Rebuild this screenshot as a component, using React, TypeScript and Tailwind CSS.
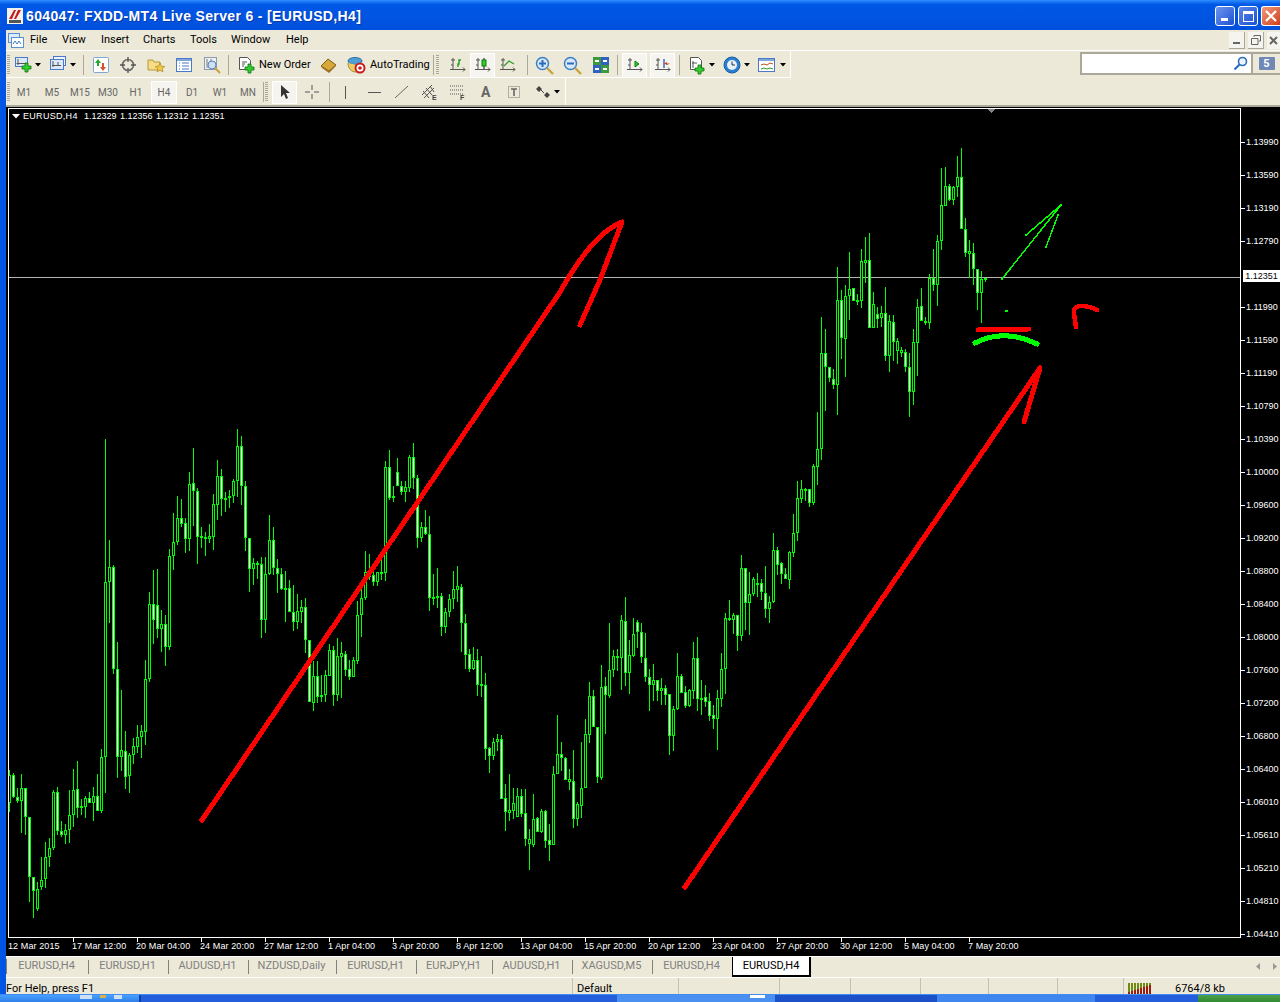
import type { ReactNode } from "react";

// x, high, body top, body bottom, low, 1 = white body
const candles: number[][] = [
  [9,770,775,803,812,0],[13,773,775,797,798,1],[17,788,797,801,803,1],[21,774,788,801,833,0],[25,788,788,817,835,1],[29,817,817,877,902,1],[33,877,877,891,918,1],[37,882,889,909,911,0],
  [41,857,880,887,890,0],[45,842,857,879,888,0],[49,838,848,857,867,0],[53,790,792,848,850,0],[57,787,792,831,835,1],[61,821,831,835,837,1],[65,824,830,835,844,0],[69,790,815,830,843,0],
  [73,769,790,815,827,0],[77,761,789,808,818,1],[81,799,806,808,815,1],[85,796,798,807,818,0],[89,792,798,803,803,1],[93,787,796,803,821,0],[97,774,796,811,811,1],[101,749,757,811,813,0],
  [105,439,582,757,793,0],[109,540,567,582,623,0],[113,565,567,669,674,1],[117,642,669,757,778,1],[121,690,750,757,771,0],[125,731,751,777,789,1],[129,753,755,776,793,0],[133,738,746,755,764,0],
  [137,725,737,747,753,0],[141,725,731,737,758,0],[145,660,679,732,745,0],[149,592,604,679,682,0],[153,570,604,620,644,1],[157,569,605,629,638,1],[161,610,624,629,652,0],[165,615,624,647,666,1],
  [169,549,556,647,650,0],[173,513,542,556,570,0],[177,496,518,542,545,0],[181,499,518,524,527,1],[185,518,523,539,553,1],[189,472,484,539,551,0],[193,448,483,491,526,1],[197,488,491,537,564,1],
  [201,527,536,537,548,1],[205,532,537,539,556,1],[209,524,536,539,543,0],[213,494,504,537,550,0],[217,460,476,505,520,0],[221,469,476,499,516,1],[225,492,498,499,512,1],[229,490,496,498,508,0],
  [233,479,481,496,503,0],[237,429,446,481,497,0],[241,436,446,486,505,1],[245,481,486,538,551,1],[249,538,538,569,592,1],[253,558,563,569,585,0],[257,561,563,564,579,1],[261,557,564,620,638,1],
  [265,557,574,620,633,0],[269,515,540,574,575,0],[273,527,540,568,575,1],[277,559,568,574,593,1],[281,568,574,589,590,1],[285,571,588,589,622,1],[289,580,588,612,612,1],[293,585,612,622,631,1],
  [297,594,611,622,629,0],[301,600,607,612,623,0],[305,598,607,640,653,1],[309,640,640,702,702,1],[313,661,676,703,711,0],[317,661,676,697,703,1],[321,675,695,697,702,0],[325,670,675,695,702,0],
  [329,644,650,676,676,0],[333,646,650,695,706,1],[337,638,656,695,701,0],[341,642,653,657,698,0],[345,651,654,670,676,1],[349,660,669,677,680,1],[353,657,660,677,677,0],[357,601,615,661,664,0],
  [361,581,598,615,637,0],[365,551,572,598,600,0],[369,554,572,577,580,0],[373,570,575,582,586,1],[377,572,572,582,586,0],[381,560,572,573,580,1],[385,461,467,573,581,0],[389,450,467,498,500,1],
  [393,486,496,498,502,1],[397,458,472,486,486,1],[401,481,486,492,495,1],[405,481,487,492,502,0],[409,455,457,488,492,0],[413,443,457,478,489,1],[417,475,478,538,548,1],[421,522,527,538,542,0],
  [425,510,527,534,535,1],[429,516,534,598,611,1],[433,574,597,598,605,1],[437,568,596,598,608,1],[441,593,596,627,636,1],[445,608,612,627,633,0],[449,594,599,612,617,0],[453,571,589,599,609,0],
  [457,566,586,590,602,0],[461,584,587,623,652,1],[465,614,623,655,669,1],[469,649,654,669,672,1],[473,647,660,669,670,0],[477,649,660,685,696,1],[481,656,684,686,697,1],[485,673,685,749,760,1],
  [489,747,748,756,773,1],[493,738,742,756,760,0],[497,734,739,742,751,0],[501,735,739,799,799,1],[505,784,798,812,831,1],[509,774,810,813,821,0],[513,788,803,811,819,0],[517,788,796,817,817,0],
  [521,789,796,814,817,1],[525,789,813,839,846,1],[529,829,839,844,870,0],[533,794,819,845,847,0],[537,817,818,832,832,1],[541,809,811,832,833,0],[545,810,811,841,848,1],[549,824,840,845,861,1],
  [553,766,774,845,845,0],[557,715,754,774,774,0],[561,742,754,758,771,1],[565,757,758,780,780,1],[569,769,779,782,790,0],[573,750,781,819,828,1],[577,802,804,819,826,0],[581,742,788,806,818,0],
  [585,719,734,788,788,0],[589,682,696,735,743,0],[593,690,696,727,727,1],[597,727,727,777,783,1],[601,665,687,778,780,0],[605,677,686,695,734,1],[609,623,670,696,698,0],[613,650,656,670,677,0],
  [617,649,656,658,671,0],[621,615,620,658,690,0],[625,597,621,673,686,1],[629,640,655,673,694,0],[633,618,634,656,657,0],[637,620,622,632,648,1],[641,623,632,657,663,1],[645,633,658,677,682,1],
  [649,669,677,685,711,1],[653,664,680,685,701,0],[657,680,680,691,701,1],[661,678,688,691,705,0],[665,685,688,695,705,1],[669,694,694,736,755,1],[673,706,709,736,751,0],[677,653,676,709,710,0],
  [681,674,676,693,693,1],[685,686,692,706,708,1],[689,689,690,706,707,0],[693,642,658,691,699,0],[697,637,658,699,711,1],[701,680,698,699,715,1],[705,685,697,702,707,1],[709,693,701,716,721,1],
  [713,705,715,719,729,1],[717,690,698,719,750,0],[721,653,669,699,707,0],[725,613,618,669,694,0],[729,600,618,620,621,0],[733,613,615,620,634,0],[737,615,615,636,651,1],[741,555,568,636,641,0],
  [745,568,568,603,630,1],[749,572,594,603,635,0],[753,577,579,594,596,0],[757,573,583,585,597,0],[761,579,583,592,600,1],[765,566,593,609,618,1],[769,596,602,609,623,0],[773,533,550,602,603,0],
  [777,547,550,565,575,1],[781,562,563,574,584,1],[785,568,574,579,579,1],[789,551,552,580,589,0],[793,514,533,553,557,0],[797,481,498,533,541,0],[801,480,489,499,503,0],[805,488,489,490,501,1],
  [809,489,489,503,507,1],[813,464,466,503,505,0],[817,412,449,467,485,0],[821,317,353,449,460,0],[825,329,353,367,411,1],[829,367,367,378,382,1],[833,369,379,385,389,1],[837,267,300,385,415,0],
  [841,290,300,338,359,1],[845,285,296,339,377,0],[849,252,289,296,320,0],[853,288,288,301,301,1],[857,294,300,301,305,1],[861,249,261,301,308,0],[865,237,260,263,283,0],[869,233,260,328,328,1],
  [873,292,304,328,328,0],[877,307,314,319,328,1],[881,306,313,318,327,0],[885,287,313,356,361,1],[889,315,321,356,372,0],[893,315,322,342,361,1],[897,338,341,351,364,0],[901,347,350,353,357,0],
  [905,349,352,367,372,1],[909,353,367,392,417,1],[913,329,342,392,405,0],[917,299,307,343,376,0],[921,288,306,321,321,1],[925,317,321,323,325,0],[929,274,278,323,329,0],[933,249,278,285,291,1],
  [937,235,241,285,306,0],[941,168,205,241,250,0],[945,167,186,206,206,0],[949,184,186,200,201,1],[953,186,187,200,205,0],[957,156,177,187,197,0],[961,148,177,229,229,1],[965,218,229,253,257,1],
  [969,240,251,254,278,0],[973,243,253,269,285,1],[977,269,269,293,310,1],[981,271,279,293,323,0],[985,278,278,280,282,0],
];

const prices = ["1.13990","1.13590","1.13190","1.12790","","1.11990","1.11590","1.11190","1.10790","1.10390","1.10000","1.09600","1.09200","1.08800","1.08400","1.08000","1.07600","1.07200","1.06800","1.06400","1.06010","1.05610","1.05210","1.04810","1.04410"];
const times = ["12 Mar 2015","17 Mar 12:00","20 Mar 04:00","24 Mar 20:00","27 Mar 12:00","1 Apr 04:00","3 Apr 20:00","8 Apr 12:00","13 Apr 04:00","15 Apr 20:00","20 Apr 12:00","23 Apr 04:00","27 Apr 20:00","30 Apr 12:00","5 May 04:00","7 May 20:00"];
const menus: [string, string][] = [["File","w-[32px]"],["View","w-[39px]"],["Insert","w-[42px]"],["Charts","w-[47px]"],["Tools","w-[41px]"],["Window","w-[55px]"],["Help","w-[30px]"]];
const frames = ["M1","M5","M15","M30","H1","H4","D1","W1","MN"];
const tabs: [string, string][] = [
  ["EURUSD,H4","w-[82px]"],["EURUSD,H1","w-[80px]"],["AUDUSD,H1","w-[80px]"],["NZDUSD,Daily","w-[88px]"],["EURUSD,H1","w-[80px]"],
  ["EURJPY,H1","w-[76px]"],["AUDUSD,H1","w-[80px]"],["XAGUSD,M5","w-[80px]"],["EURUSD,H4","w-[79px]"],
];
const statusCells = ["w-[567px]","w-[106px]","w-[101px]","w-[71px]","w-[70px]","w-[68px]","w-[69px]","w-[66px]"];

function Icon({ w = 18, h = 18, children, className = "" }: { w?: number; h?: number; children: ReactNode; className?: string }) {
  return (
    <svg width={w} height={h} viewBox={`0 0 ${w} ${h}`} className={`shrink-0 ${className}`}>
      {children}
    </svg>
  );
}

const Arrow = ({ className = "" }: { className?: string }) => (
  <svg width="6" height="4" viewBox="0 0 6 4" className={`shrink-0 ${className}`}>
    <path d="M0 0h6L3 3.5z" fill="#000" />
  </svg>
);

const Sep = ({ className = "" }: { className?: string }) => <div className={`w-px h-[20px] bg-[#aca899] shrink-0 ${className}`} />;

const Grip = ({ className = "" }: { className?: string }) => (
  <div className={`w-[3px] h-[20px] shrink-0 border-y-0 bg-[repeating-linear-gradient(to_bottom,#aca899_0,#aca899_1px,#ece9d8_1px,#ece9d8_2px)] ${className}`} />
);

const PlusBadge = ({ x, y }: { x: number; y: number }) => (
  <path d={`M${x + 3} ${y}h3v3h3v3h-3v3h-3v-3h-3v-3h3z`} fill="#2fd02f" stroke="#0d6f0d" strokeWidth="0.8" />
);

const AxisChart = ({ children }: { children?: ReactNode }) => (
  <Icon w={16} h={16}>
    <path d="M3 1v12M0 12.5h15M1 3h4M1 8h2M13 10.5l2 2-2 2" stroke="#555" strokeWidth="1" fill="none" />
    {children}
  </Icon>
);

function Toolbar1() {
  return (
    <div className="flex items-center h-[27px] pt-[2px] w-[785px] border-b border-r border-white">
      <Grip className="ml-[1px]" />
      <Icon className="ml-[5px]">
        <rect x="0.5" y="1.5" width="12" height="9" fill="#dbe9fb" stroke="#4a79c9" />
        <path d="M3 3v6M1.5 7.5h9" stroke="#555" />
        <PlusBadge x={7} y={7} />
      </Icon>
      <Arrow className="ml-[2px]" />
      <Icon className="ml-[9px]">
        <rect x="3.5" y="0.5" width="12" height="9" fill="#eef4fd" stroke="#4a79c9" />
        <rect x="0.5" y="3.5" width="13" height="10" fill="#dbe9fb" stroke="#4a79c9" />
        <path d="M3 5v6M2 9.5h9M8 6v3" stroke="#555" />
      </Icon>
      <Arrow className="ml-[2px]" />
      <Sep className="ml-[7px]" />
      <Icon className="ml-[8px]">
        <rect x="1.5" y="1.5" width="15" height="15" rx="1" fill="#fff" stroke="#7fa6d8" />
        <path d="M6 3l3 4H7v3H5V7H3z" fill="#2aa52a" />
        <path d="M11 15l-3-4h2V7h2v4h2z" fill="#d8502a" />
      </Icon>
      <Icon className="ml-[9px]">
        <circle cx="9" cy="9" r="5.5" fill="none" stroke="#6a6a6a" strokeWidth="1.6" />
        <path d="M9 1v5M9 12v5M1 9h5M12 9h5" stroke="#555" strokeWidth="1.3" />
      </Icon>
      <Icon className="ml-[10px]">
        <path d="M1 4h5l1 2h6v8H1z" fill="#f5dc85" stroke="#b8963a" />
        <path d="M13 7l1.4 3.2 3.4.3-2.6 2.2.8 3.3-3-1.8-3 1.8.8-3.3-2.6-2.2 3.4-.3z" fill="#f3c93b" stroke="#a9842a" strokeWidth="0.7" />
      </Icon>
      <Icon className="ml-[10px]">
        <rect x="1.5" y="2.5" width="15" height="13" fill="#fff" stroke="#4a79c9" />
        <path d="M2 3h14v2H2z" fill="#7fa6d8" />
        <path d="M4 7h1M4 10h1M4 13h1M7 7h7M7 10h7M7 13h7" stroke="#4a79c9" />
      </Icon>
      <Icon className="ml-[10px]">
        <rect x="1.5" y="1.5" width="12" height="12" fill="#eef1f5" stroke="#8a9ab0" />
        <path d="M4 3v9M8 3v9" stroke="#777" />
        <circle cx="9" cy="9" r="4" fill="#cfe0f5" stroke="#5a82b8" />
        <path d="M12 12l5 5" stroke="#c9a33a" strokeWidth="2" />
      </Icon>
      <Sep className="ml-[7px]" />
      <Icon className="ml-[8px]">
        <path d="M2.5 1.5h8l3 3v9h-11z" fill="#fff" stroke="#555" />
        <path d="M5 6h5M5 8h3M5 10h2" stroke="#555" />
        <PlusBadge x={8} y={8} />
      </Icon>
      <span className="ml-[4px] w-[60px] shrink-0 text-[11px] text-black whitespace-nowrap">New Order</span>
      <Icon className="ml-[1px]">
        <path d="M1 10l7-7 8 6-7 6z" fill="#d8a93a" stroke="#7d5c18" />
        <path d="M1 10l1 2 7 5 7-7v-1l-7 6z" fill="#9a7423" />
      </Icon>
      <Icon className="ml-[9px]" w={19}>
        <ellipse cx="8" cy="5" rx="7" ry="3.5" fill="#4e9fd6" stroke="#2d6f9e" />
        <path d="M1 7c0 5 3 9 8 9s6-3 6-6" fill="#f0cd63" stroke="#a98a2c" />
        <circle cx="13" cy="12" r="4.5" fill="#fff" stroke="#c81e1e" strokeWidth="2" />
        <circle cx="13" cy="12" r="1.8" fill="#c81e1e" />
      </Icon>
      <span className="ml-[4px] w-[60px] shrink-0 text-[11px] text-black whitespace-nowrap">AutoTrading</span>
      <Sep className="ml-[3px]" />
      <Grip className="ml-[2px]" />
      <div className="ml-[6px] w-[25px] h-[25px] shrink-0 flex items-center justify-center">
        <AxisChart><path d="M8 10V7h1V3h2" stroke="#1f9e1f" strokeWidth="1.4" fill="none" /></AxisChart>
      </div>
      <div className="w-[25px] h-[25px] shrink-0 flex items-center justify-center bg-[#f5f4ee] border border-white">
        <AxisChart>
          <path d="M9 1v11" stroke="#111" />
          <rect x="7" y="3" width="4" height="6" fill="#2ecc2e" stroke="#0c7a0c" />
        </AxisChart>
      </div>
      <div className="w-[25px] h-[25px] shrink-0 flex items-center justify-center">
        <AxisChart><path d="M4 9l5-5 5 3" stroke="#2a9d2a" strokeWidth="1.2" fill="none" /></AxisChart>
      </div>
      <Sep className="ml-[7px]" />
      <Icon className="ml-[7px]" w={19} h={19}>
        <circle cx="7.5" cy="7.5" r="6" fill="#d7e8fb" stroke="#3f7fc4" strokeWidth="1.5" />
        <path d="M4 7.5h7M7.5 4v7" stroke="#2b6cb8" strokeWidth="2" />
        <path d="M12 12l6 6" stroke="#c9a33a" strokeWidth="2.4" />
      </Icon>
      <Icon className="ml-[9px]" w={19} h={19}>
        <circle cx="7.5" cy="7.5" r="6" fill="#d7e8fb" stroke="#3f7fc4" strokeWidth="1.5" />
        <path d="M4 7.5h7" stroke="#2b6cb8" strokeWidth="2" />
        <path d="M12 12l6 6" stroke="#c9a33a" strokeWidth="2.4" />
      </Icon>
      <Icon className="ml-[10px]">
        <rect x="1" y="1" width="8" height="8" fill="#3c9a3c" />
        <rect x="9" y="1" width="8" height="8" fill="#2f62c0" />
        <rect x="1" y="9" width="8" height="8" fill="#2f62c0" />
        <rect x="9" y="9" width="8" height="8" fill="#3c9a3c" />
        <path d="M3 5h4M11 5h4M3 13h4M11 13h4" stroke="#fff" strokeWidth="2" />
      </Icon>
      <Sep className="ml-[7px]" />
      <div className="ml-[4px] w-[25px] h-[25px] shrink-0 flex items-center justify-center bg-[#f5f4ee] border border-white">
        <AxisChart><path d="M8 4l4 3-4 3z" fill="#2ecc2e" stroke="#0c7a0c" /></AxisChart>
      </div>
      <div className="ml-[3px] w-[25px] h-[25px] shrink-0 flex items-center justify-center bg-[#f5f4ee] border border-white">
        <AxisChart><path d="M9 2v9" stroke="#2f62c0" strokeWidth="1.4" /><path d="M15 6.5h-3V5l-3 1.5L12 8z" fill="#c8401e" /></AxisChart>
      </div>
      <Sep className="ml-[4px]" />
      <Icon className="ml-[8px]" w={18} h={19}>
        <path d="M2.5 1.5h8l3 3v9h-11z" fill="#fff" stroke="#555" />
        <path d="M5 12V5M4 7h5" stroke="#555" />
        <PlusBadge x={7} y={9} />
      </Icon>
      <Arrow className="ml-[3px]" />
      <Icon className="ml-[8px]" w={18} h={18}>
        <circle cx="9" cy="9" r="8" fill="#2a7fd0" stroke="#1a5ca3" />
        <circle cx="9" cy="9" r="5" fill="#e8f0f8" />
        <path d="M9 5.5V9h3" stroke="#333" fill="none" />
      </Icon>
      <Arrow className="ml-[3px]" />
      <Icon className="ml-[8px]">
        <rect x="0.5" y="2.5" width="16" height="13" fill="#fff" stroke="#4a79c9" />
        <path d="M1 3h15v2H1z" fill="#7fa6d8" />
        <path d="M3 9l3-1 3 1 3-2 3 1" stroke="#b5561e" fill="none" />
        <path d="M3 13l3-1 3 1 3-1 3 1" stroke="#2a9d2a" fill="none" />
      </Icon>
      <Arrow className="ml-[4px]" />
    </div>
  );
}

function Toolbar2() {
  return (
    <div className="flex items-center h-[27px] pt-px w-[560px] border-r border-white">
      <Grip className="ml-[1px]" />
      <div className="flex items-center">
        {frames.map((f) => (
          <div
            key={f}
            className={
              f === "H4"
                ? "w-[26px] mx-px h-[23px] flex items-center justify-center text-[10px] text-[#666] bg-[#f5f4ee] border border-white"
                : "w-[28px] h-[23px] flex items-center justify-center text-[10px] text-[#666]"
            }
          >
            {f}
          </div>
        ))}
      </div>
      <Sep className="ml-[1px]" />
      <Grip className="ml-[1px]" />
      <div className="ml-[4px] w-[25px] h-[23px] shrink-0 flex items-center justify-center bg-[#f5f4ee] border border-white">
        <Icon w={12} h={16}>
          <path d="M2 1v12l3-3 2 5 2-1-2-5h4z" fill="#333" />
        </Icon>
      </div>
      <Icon className="ml-[7px]" w={16} h={16}>
        <path d="M8 1v5M8 10v5M1 8h5M10 8h5" stroke="#555" />
      </Icon>
      <Sep className="ml-[9px]" />
      <div className="ml-[15px] w-px h-[13px] bg-[#555] shrink-0" />
      <div className="ml-[22px] w-[13px] h-px bg-[#555] shrink-0" />
      <Icon className="ml-[13px]" w={16} h={14}>
        <path d="M1 13L14 1" stroke="#666" />
      </Icon>
      <Icon className="ml-[11px]" w={16} h={18}>
        <path d="M1 12L11 2M3 15L13 5M2 8l6 7M5 5l6 7M9 3l4 6" stroke="#555" fill="none" />
        <text x="11" y="17" fontSize="7" fontWeight="700" fill="#444" fontFamily="Liberation Sans, sans-serif">E</text>
      </Icon>
      <Icon className="ml-[12px]" w={16} h={18}>
        <path d="M1 3h13M1 7h13M1 11h13" stroke="#555" strokeDasharray="1 1" />
        <text x="11" y="17" fontSize="7" fontWeight="700" fill="#444" fontFamily="Liberation Sans, sans-serif">F</text>
      </Icon>
      <span className="ml-[16px] w-[10px] shrink-0 text-[14px] leading-none font-bold text-[#666]">A</span>
      <Icon className="ml-[16px]" w={14} h={16}>
        <rect x="1.5" y="2.5" width="11" height="11" fill="none" stroke="#777" strokeDasharray="1 1" />
        <path d="M4 5h6M7 5v7" stroke="#666" strokeWidth="1.6" />
      </Icon>
      <Icon className="ml-[15px]" w={16} h={14}>
        <path d="M3 1L6 4 3 7 0 4zM11 7l3 3-3 3-3-3z" fill="#444" />
        <path d="M5 5l3 3" stroke="#444" />
      </Icon>
      <Arrow className="ml-[2px]" />
    </div>
  );
}

function Chart() {
  return (
    <div className="flex-1 bg-black flex flex-col pl-[2px] pt-px text-[9px] leading-none text-white font-['Liberation_Sans',sans-serif]">
      <div className="flex relative h-[830px]">
        <div className="relative w-[1233px] h-[830px] shrink-0 border border-white overflow-hidden">
          <svg width="1233" height="830" viewBox="8 108 1233 830" className="absolute left-[-1px] top-[-1px]" shapeRendering="crispEdges">
            <rect x="9" y="277" width="1231" height="1" fill="#b4b4b4" />
            <path d="M987 108h9l-4.500 5z" fill="#808080" />
            {candles.map(([x, h, t, b, l, f]) => (
              <g key={x}>
                <rect x={x} y={h} width="1" height={l - h} fill="#00ff00" />
                <rect x={x - 1} y={t} width="3" height={Math.max(b - t, 2)} fill="#00ff00" />
                {b - t > 2 && <rect x={x} y={t + 1} width="1" height={b - t - 2} fill={f ? "#ffffff" : "#000000"} />}
              </g>
            ))}
            <g fill="none" strokeLinecap="round" strokeLinejoin="round">
              <path d="M202 820L560 292C575 265 597 232 622 222L600 280 580 325" stroke="#ff0000" strokeWidth="5" />
              <path d="M685 887L840 660 1040 368 1024 422" stroke="#ff0000" strokeWidth="5" />
              <path d="M978 330L1029 329" stroke="#ff0000" strokeWidth="5" />
              <path d="M975 343Q1004 328 1037 344" stroke="#00ff00" strokeWidth="5" />
              <path d="M1097 310Q1090 306 1080 306 1073 307 1074 313L1076 327" stroke="#ff0000" strokeWidth="4.500" />
              <path d="M1002 279L1061 205 1026 235M1058 215L1046 247" stroke="#00ff00" strokeWidth="1.500" />
              <path d="M1006 311h1" stroke="#00ff00" strokeWidth="2" />
            </g>
          </svg>
          <div className="absolute left-[3px] top-[3px] flex items-center whitespace-nowrap">
            <svg width="8" height="5" viewBox="0 0 8 5" className="mr-[3px] shrink-0"><path d="M0 0h8L4 4.500z" fill="#fff" /></svg>
            <span className="w-[61px] shrink-0 tracking-[0.3px]">EURUSD,H4</span>
            <span className="w-[36px] shrink-0">1.12329</span>
            <span className="w-[36px] shrink-0">1.12356</span>
            <span className="w-[36px] shrink-0">1.12312</span>
            <span className="w-[36px] shrink-0">1.12351</span>
          </div>
        </div>
        <div className="w-[39px] shrink-0 pt-[18px]">
          {prices.map((p, i) => (
            <div key={i} className="h-[33px] flex items-center whitespace-nowrap">
              {p && <div className="w-[4px] h-px shrink-0 bg-white mr-[1px]" />}
              <span>{p}</span>
            </div>
          ))}
        </div>
        <div className="absolute left-[1235px] top-[162px] w-[37px] h-[12px] bg-white text-black flex items-center justify-center">1.12351</div>
      </div>
      <div className="flex pl-px">
        {times.map((t, i) => (
          <div key={t} className="w-[64px] shrink-0">
            <div className={i === 0 ? "h-[4px]" : "w-px h-[4px] bg-white"} />
            <div className="mt-[-2px] ml-[-1px] h-[12px] flex items-center whitespace-nowrap tracking-[0.1px]">{t}</div>
          </div>
        ))}
      </div>
    </div>
  );
}

export default function App() {
  return (
    <div className="w-[1280px] h-[1002px] flex flex-col overflow-hidden bg-[#0055e5] font-['Roboto',sans-serif]">
      {/* title bar */}
      <div className="h-[30px] shrink-0 flex items-center pl-[7px] pt-[2px] bg-gradient-to-b from-[#2f8cff] via-[#0058e6] via-[15%] to-[#0050dc] font-['Liberation_Sans',sans-serif]">
        <svg width="16" height="16" viewBox="0 0 16 16" className="shrink-0">
          <rect width="16" height="16" fill="#f4f2ee" />
          <path d="M2 11L7 2h2L5 11zM7 11l4-9h3l-5 9z" fill="#c41e1e" />
          <rect x="2" y="12" width="12" height="3" fill="#555" />
        </svg>
        <span className="ml-[3px] text-[14px] font-bold text-white tracking-[0.35px] whitespace-nowrap [text-shadow:1px_1px_0_#0a3aa8]">604047: FXDD-MT4 Live Server 6 - [EURUSD,H4]</span>
        <div className="ml-auto flex items-center gap-[3px]">
          <div className="w-[20px] h-[20px] rounded-[3px] border border-white bg-gradient-to-br from-[#6f95ee] to-[#1c4fd0] flex items-end pl-[5px] pb-[4px]">
            <div className="w-[7px] h-[3px] bg-white" />
          </div>
          <div className="w-[20px] h-[20px] rounded-[3px] border border-white bg-gradient-to-br from-[#5a86ea] to-[#1c4fd0] flex items-center justify-center">
            <div className="w-[11px] h-[11px] border border-white border-t-[3px]" />
          </div>
          <div className="w-[19px] h-[20px] rounded-l-[3px] border border-r-0 border-white bg-gradient-to-br from-[#ee9a7a] to-[#cf3a14] flex items-center justify-center">
            <svg width="12" height="12" viewBox="0 0 12 12"><path d="M1 1l10 10M11 1L1 11" stroke="#fff" strokeWidth="2.200" /></svg>
          </div>
        </div>
      </div>

      <div className="flex-1 min-h-0 flex flex-col ml-[6px] bg-[#ece9d8]">
        {/* menu */}
        <div className="h-[21px] shrink-0 flex items-center border-b border-white">
          <svg width="16" height="17" viewBox="0 0 16 17" className="ml-[2px] shrink-0">
            <rect x="0.500" y="1.500" width="11" height="9" fill="#dcebfb" stroke="#5a8fd0" />
            <rect x="3.500" y="5.500" width="12" height="10" fill="#fff" stroke="#5a8fd0" />
            <path d="M5 12l2-3 2 3 2-3 2 3" stroke="#3f7fc4" fill="none" />
          </svg>
          <div className="ml-[6px] pt-px flex text-[11px] text-black">
            {menus.map(([m, w]) => <span key={m} className={w}>{m}</span>)}
          </div>
          <div className="ml-auto flex items-center gap-[3px] text-[#555]">
            <div className="w-[16px] h-[17px] bg-[#f5f4ee] border-r border-b border-[#aca899] flex items-end justify-center pb-[4px]"><div className="w-[7px] h-[2px] bg-[#666]" /></div>
            <div className="w-[16px] h-[17px] bg-[#f5f4ee] border-r border-b border-[#aca899] flex items-center justify-center">
              <svg width="10" height="10" viewBox="0 0 10 10"><path d="M3 2V.5h6.500V6H8M.5 3.500H7V9.500H.5z" fill="none" stroke="#666" /></svg>
            </div>
            <div className="w-[13px] h-[17px] bg-[#f5f4ee] flex items-center justify-center">
              <svg width="9" height="9" viewBox="0 0 9 9"><path d="M1 1l7 7M8 1L1 8" stroke="#666" strokeWidth="2" /></svg>
            </div>
          </div>
        </div>

        {/* toolbars */}
        <div className="shrink-0 flex items-start">
          <Toolbar1 />
          <div className="ml-auto mt-px w-[173px] h-[23px] bg-white border-2 border-[#aca899] flex items-center justify-end pr-[3px]">
            <svg width="15" height="15" viewBox="0 0 15 15">
              <circle cx="9.500" cy="5.500" r="4" fill="#eef4fd" stroke="#2b6cb8" strokeWidth="1.600" />
              <path d="M6.500 8.500L1.500 13.500" stroke="#2b6cb8" strokeWidth="2.200" />
            </svg>
          </div>
          <div className="w-[27px] h-[23px] mt-px shrink-0 flex items-center justify-center border-y-2 border-[#aca899]">
            <div className="w-[16px] h-[13px] bg-[#6f88b5] text-white text-[11px] leading-[13px] font-bold text-center rounded-[1px]">5</div>
          </div>
        </div>
        <div className="shrink-0 border-b-2 border-[#aca899]">
          <Toolbar2 />
        </div>

        <Chart />

        {/* tabs */}
        <div className="h-[21px] shrink-0 flex items-start border-t border-white text-[11px] text-[#808080]">
          <div className="w-px h-[15px] mt-[2px] bg-[#808080] shrink-0" />
          <div className="flex items-center h-[19px]">
            {tabs.map(([t, w], i) => (
              <div key={i} className={`${w} flex items-center justify-center pr-[2px] h-[14px] ${i < tabs.length - 1 ? "border-r border-[#808080]" : ""}`}>{t}</div>
            ))}
          </div>
          <div className="w-[79px] h-[20px] bg-white border border-t-0 border-black border-b-2 border-r-2 text-black flex items-center justify-center">EURUSD,H4</div>
          <div className="ml-auto flex items-center gap-[13px] h-[19px] pr-[3px]">
            <svg width="4" height="7" viewBox="0 0 4 7"><path d="M4 0v7L0 3.500z" fill="#999" /></svg>
            <svg width="4" height="7" viewBox="0 0 4 7"><path d="M0 0v7l4-3.500z" fill="#999" /></svg>
          </div>
        </div>

        {/* status bar */}
        <div className="h-[17px] shrink-0 flex items-stretch border-t border-white text-[11px] text-black overflow-hidden">
          {statusCells.map((w, i) => (
            <div key={i} className={`${w} shrink-0 border-r border-[#c5c2b2] ${i === 0 ? "pl-0" : "pl-[4px]"} leading-[22px] whitespace-nowrap`}>
              {i === 0 && "For Help, press F1"}
              {i === 1 && "Default"}
            </div>
          ))}
          <svg width="24" height="11" viewBox="0 0 24 11" className="ml-[4px] mt-[5px] shrink-0" shapeRendering="crispEdges">
            <path d="M1 0v11M4 0v11M7 0v11M10 0v11M13 0v11M16 0v11M19 0v11M22 0v11" stroke="#6e8a12" strokeWidth="2" />
            <path d="M1 9v2M4 8v3M7 7v4M10 6v5M13 5v6M16 4v7M19 3v8M22 2v9" stroke="#a01c10" strokeWidth="2" />
          </svg>
          <span className="ml-[23px] leading-[22px] whitespace-nowrap">6764/8 kb</span>
        </div>
      </div>

      {/* taskbar strip */}
      <div className="h-[8px] shrink-0 flex bg-[#245edb] border-t border-[#3f8cf3]">
        <div className="w-[141px] shrink-0 bg-gradient-to-b from-[#48a0ff] to-[#2f80ea] border-r-2 border-[#0d3fa8] flex items-start gap-[8px] pl-[80px]">
          <div className="w-[12px] h-[4px] bg-[#cfe0f5]" />
          <div className="w-[6px] h-[3px] bg-[#d6b24a]" />
          <div className="w-[8px] h-[4px] bg-[#cfe0f5]" />
        </div>
        <div className="w-[476px] shrink-0" />
        <div className="w-[158px] shrink-0 bg-[#4a90f0] flex justify-end pr-[10px]"><div className="w-[15px] h-[3px] bg-white" /></div>
        <div className="w-[162px] shrink-0 bg-[#1c50c8]" />
        <div className="w-[158px] shrink-0 bg-[#3f86ee]" />
        <div className="w-[103px] shrink-0" />
        <div className="w-[82px] shrink-0 bg-gradient-to-b from-[#4da04a] to-[#2f8a30]" />
      </div>
    </div>
  );
}
